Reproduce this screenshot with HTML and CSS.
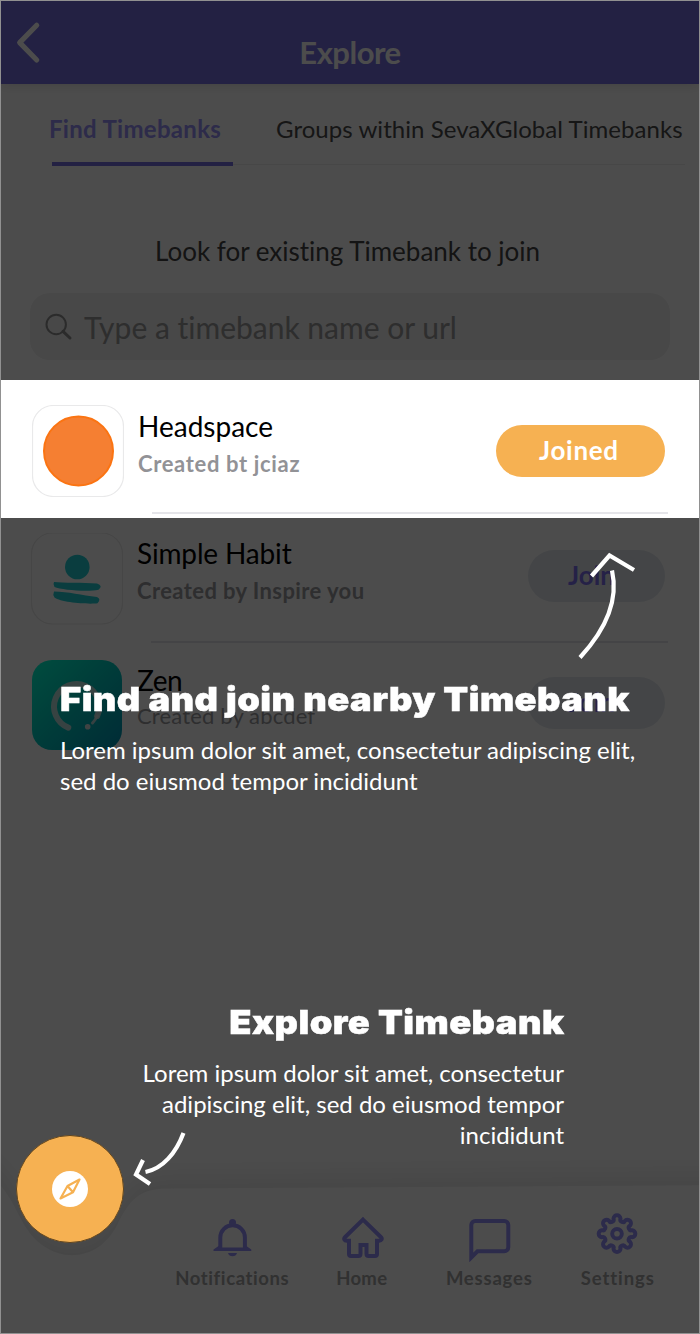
FILE: index.html
```html
<!DOCTYPE html>
<html lang="en">
<head>
<meta charset="utf-8">
<title>Explore</title>
<link rel="stylesheet" href="styles.css">
</head>
<body>
<div class="screen">
  <header class="header">
    <svg class="back" width="30" height="44" viewBox="0 0 30 44"><path d="M22.7 4.3 5.7 21.6 22.7 39"/></svg>
    <h1 class="header-title">Explore</h1>
  </header>

  <nav class="tabs">
    <span class="tab tab-active">Find Timebanks</span>
    <span class="tab tab-groups">Groups within SevaXGlobal Timebanks</span>
  </nav>
  <div class="track"><div class="indicator"></div></div>

  <p class="prompt">Look for existing Timebank to join</p>
  <div class="search">
    <svg class="search-icon" width="30" height="30" viewBox="0 0 30 30"><circle cx="12.2" cy="12.5" r="9.7"/><path d="M19 19.3 26 26"/></svg>
    <span class="placeholder">Type a timebank name or url</span>
  </div>

  <section class="row row-spotlight">
    <svg class="app-icon" width="92" height="92" viewBox="0 0 92 92">
      <rect class="tile" x=".5" y=".5" width="91" height="91" rx="21"/>
      <circle class="sun" cx="46.500" cy="46" r="34.5"/>
    </svg>
    <div class="info">
      <h2 class="name name-headspace">Headspace</h2>
      <p class="by by-headspace">Created bt jciaz</p>
    </div>
    <span class="pill pill-joined">Joined</span>
    <div class="divider"></div>
  </section>

  <section class="row row-habit">
    <svg class="app-icon" width="92" height="92" viewBox="0 0 92 92">
      <rect class="tile" x=".5" y="0" width="91" height="91" rx="21"/>
      <circle class="teal" cx="46.3" cy="34" r="12.3"/>
      <path class="teal" d="M23 49C32 50 52 49.500 66 50.500q6.500 2.200 1.500 6.300C57 59 30 57 23.500 54q-1.800-3-.5-5zM23 58.500c14 0 28 4 43 5.500q4.500 2 .5 6.300C57 71.500 30 69.500 23.500 64.500q-2-3-.5-6z"/>
    </svg>
    <div class="info">
      <h2 class="name name-habit">Simple Habit</h2>
      <p class="by by-habit">Created by Inspire you</p>
    </div>
    <span class="pill">Join</span>
    <div class="divider"></div>
  </section>

  <section class="row row-zen">
    <svg class="app-icon" width="92" height="92" viewBox="0 0 92 92">
      <defs><linearGradient id="zen" x1="0" y1="0" x2="1" y2="1"><stop offset="0" stop-color="#00ffd2"/><stop offset=".4" stop-color="#00d2c2"/><stop offset="1" stop-color="#0092b4"/></linearGradient></defs>
      <rect x="1" y="0" width="90" height="90" rx="20" fill="url(#zen)"/>
      <path class="ring" d="M37.300 67.600A22.600 22.600 0 1 1 66.200 56"/>
      <path class="ring ring-thin" d="M66.200 56A22.600 22.600 0 0 1 61.500 63"/>
      <circle class="ring-dot" cx="56.700" cy="66.700" r="2.800"/>
    </svg>
    <div class="info">
      <h2 class="name name-zen">Zen</h2>
      <p class="by by-zen">Created by abcdef</p>
    </div>
    <span class="pill">Join</span>
  </section>

  <footer class="bottom">
    <svg class="bar-shape" width="698" height="204" viewBox="0 0 698 204"><path d="M-30 30C0 50 10 70 20 90 44 138 98 138 118 92 131 67 142 59 169 59.500L740 56V260H-30Z"/></svg>
    <div class="items">
      <div class="item">
        <svg class="nav-icon" width="50" height="50" viewBox="0 0 50 50"><path d="M13.300 37V25.500a12.300 12.300 0 0 1 24.600 0V37"/><path class="solid" d="M6.500 37.500 13 33v2.500h25v-2.500l6.300 4.500V39H6.500zM21 41h9q-1 3.200-4.500 3.200T21 41z"/><circle class="solid" cx="25.500" cy="10.500" r="3.500"/></svg>
        <span class="label label-notifications">Notifications</span>
      </div>
      <div class="item">
        <svg class="nav-icon" width="50" height="50" viewBox="0 0 50 50"><path d="M27 7.600 44.800 25c2 2 .5 3.700-1.500 3.700H41V42a2 2 0 0 1-2 2h-6.500a2 2 0 0 1-2-2v-9h-6v9a2 2 0 0 1-2 2H15a2 2 0 0 1-2-2V28.700h-2.300c-2.200 0-3.500-1.700-1.500-3.700z"/></svg>
        <span class="label label-home">Home</span>
      </div>
      <div class="item">
        <svg class="nav-icon" width="50" height="50" viewBox="0 0 50 50"><path d="M7.300 45.500V13a4 4 0 0 1 4-4h29a4 4 0 0 1 4 4v22.300a4 4 0 0 1-4 4H13.500z"/></svg>
        <span class="label label-messages">Messages</span>
      </div>
      <div class="item">
        <svg class="nav-icon" width="50" height="50" viewBox="0 0 50 50"><g transform="translate(24 21.700)"><circle r="4.800"/><path d="M15.100-3.490A3.500 3.500 0 0 1 15.100 3.490A2.560 2.560 0 0 0 13.140 8.210A3.500 3.500 0 0 1 8.210 13.140A2.560 2.560 0 0 0 3.490 15.100A3.500 3.500 0 0 1-3.490 15.100A2.560 2.560 0 0 0-8.210 13.140A3.500 3.500 0 0 1-13.140 8.210A2.560 2.560 0 0 0-15.100 3.490A3.500 3.500 0 0 1-15.100-3.490A2.560 2.560 0 0 0-13.140-8.210A3.500 3.500 0 0 1-8.210-13.140A2.560 2.560 0 0 0-3.490-15.100A3.500 3.500 0 0 1 3.490-15.100A2.560 2.560 0 0 0 8.210-13.140A3.500 3.500 0 0 1 13.140-8.210A2.560 2.560 0 0 0 15.100-3.490Z"/></g></svg>
        <span class="label label-settings">Settings</span>
      </div>
    </div>
    <div class="fab">
      <svg width="36" height="36" viewBox="0 0 36 36"><circle cx="18" cy="18" r="18" fill="#fff"/><path class="compass" d="M27.500 8.500 15.500 15 8.500 27.500 21 21.300zM15.500 15 21 21.300"/></svg>
    </div>
  </footer>

  <div class="scrim"></div>

  <aside class="tip tip-join">
    <h3 class="tip-title">Find and join nearby Timebank</h3>
    <p class="tip-text">Lorem ipsum dolor sit amet, consectetur adipiscing elit,<br>sed do eiusmod tempor incididunt</p>
  </aside>
  <aside class="tip tip-explore">
    <h3 class="tip-title">Explore Timebank</h3>
    <p class="tip-text">Lorem ipsum dolor sit amet, consectetur<br>adipiscing elit, sed do eiusmod tempor<br>incididunt</p>
  </aside>
  <svg class="arrow arrow-join" width="70" height="120" viewBox="0 0 70 120"><path d="M21.500 26 39.500 5.500 64 20"/><path d="M42 20.500C48 47 39 76 10 107.500"/></svg>
  <svg class="arrow arrow-explore" width="70" height="60" viewBox="0 0 70 60"><path d="M23 29 16 43.500 30 53"/><path d="M63.500 2C56 22 43 37.500 25.500 41"/></svg>
</div>
</body>
</html>
```
FILE: styles.css
```css
* { box-sizing: border-box; }
body { margin: 0; font-family: Lato, "Open Sans", sans-serif; font-variant-ligatures: none; }
h1, h2, h3, p { margin: 0; font-weight: 400; }
svg { display: block; }

.screen {
  position: relative;
  display: flex;
  flex-direction: column;
  width: 700px;
  height: 1334px;
  border: 1px solid #919191;
  background: #fff;
  overflow: hidden;
}

.header {
  flex: none;
  display: grid;
  grid-template-columns: 60px 1fr 60px;
  height: 83px;
  background: #756edf;
  box-shadow: 0 2px 10px rgba(0, 0, 0, .12);
}
.back { margin: 20px 0 0 13px; fill: none; stroke: #fff; stroke-width: 5.2; stroke-linecap: round; stroke-linejoin: round; }
.header-title {
  padding-top: 33px;
  font-size: 31px;
  line-height: 36px;
  font-weight: 700;
  letter-spacing: -.5px;
  text-align: center;
  color: #fff;
}

.tabs { flex: none; display: flex; padding: 30px 0 18px 48px; font-size: 24px; line-height: 30px; color: #4c4c4c; white-space: nowrap; }
.tab-active { flex: none; width: 227px; font-weight: 700; letter-spacing: .3px; color: #968ff8; }
.tab-groups { letter-spacing: .05px; }
.track { flex: none; height: 4px; width: 633px; margin-left: 51px; background: linear-gradient(#efefef, #efefef) 0 2px / 100% 1px no-repeat; }
.indicator { width: 181px; height: 4px; background: #756edf; }

.prompt { flex: none; margin-top: 69px; padding-left: 154px; font-size: 26px; line-height: 32px; color: #444; white-space: nowrap; }
.search {
  flex: none;
  display: flex;
  align-items: center;
  height: 67px;
  margin: 26px 29px 20px;
  padding-left: 14px;
  border-radius: 20px;
  background: #f0f0f0;
}
.search-icon { fill: none; stroke: #909090; stroke-width: 2; stroke-linecap: round; }
.search-icon path { stroke-width: 3; }
.placeholder { padding-left: 10px; font-size: 30px; line-height: 40px; color: #999; white-space: nowrap; }

.row {
  flex: none;
  display: grid;
  grid-template-columns: 92px 1fr auto;
  grid-template-rows: 1fr auto;
  align-items: start;
  padding: 0 34px 0 30px;
}
.row-spotlight { position: relative; z-index: 2; height: 138px; padding: 25px 34px 4px 31px; background: #fff; }
.row-habit { height: 125px; padding-top: 15px; }
.row-zen { height: 125px; padding-top: 17px; }
.tile { fill: #fff; stroke: #e9e9ea; stroke-width: 1.2; }
.row-habit .tile { stroke: #e9e9e9; }
.sun { fill: #f57f32; stroke: #fb7412; stroke-width: 2; }
.teal { fill: #22cdd2; }
.ring { fill: none; stroke: #d8e2e2; stroke-opacity: .85; stroke-width: 6; stroke-linecap: round; }
.ring-thin { stroke-width: 3; }
.ring-dot { fill: #d8e2e2; }

.info { padding: 2px 0 0 14px; white-space: nowrap; }
.row-spotlight .info { padding: 3px 0 0 14px; }
.name { font-size: 28px; line-height: 36px; color: #000; }
.by { margin-top: 7px; font-size: 22px; line-height: 26px; font-weight: 700; letter-spacing: .4px; color: #9a9a9e; }
.by-headspace { letter-spacing: .65px; color: #929296; }
.by-zen { margin-top: 5px; font-weight: 400; letter-spacing: .15px; }
.name-habit { letter-spacing: -.15px; }
.name-zen { letter-spacing: -.5px; }

.pill {
  width: 137px;
  height: 52px;
  margin-top: 17px;
  padding-left: 40px;
  border-radius: 26px;
  background: #e3e8ee;
  font-size: 26px;
  line-height: 50px;
  font-weight: 700;
  color: #7c70ee;
}
.pill-joined { width: 169px; margin-top: 20px; background: #f6b152; color: #fff; padding-left: 43px; letter-spacing: .7px; }
.divider { grid-column: 1 / -1; height: 2px; margin: 0 -3px 0 120px; background: #e5e5e9; }

.bottom { position: relative; height: 204px; margin-top: auto; flex: none; }
.bar-shape { position: absolute; inset: 0; overflow: visible; }
.bar-shape path { fill: #fff; filter: drop-shadow(0 -8px 14px rgba(0, 0, 0, .1)); }
.items { position: relative; display: grid; grid-template-columns: repeat(4, 128.5px); padding: 83px 0 0 167px; }
.item { display: flex; flex-direction: column; align-items: center; gap: 4px; }
.nav-icon { fill: none; stroke: #958ffa; stroke-width: 4; }
.nav-icon .solid { fill: #958ffa; stroke: none; }
.label { font-size: 18.5px; line-height: 24px; font-weight: 700; letter-spacing: .6px; color: #a4a4a4; }
.label-home { padding-left: 2px; letter-spacing: .3px; }
.label-messages { letter-spacing: .8px; }
.label-settings { letter-spacing: .9px; }
.fab {
  position: absolute;
  z-index: 2;
  left: 15px;
  top: 6px;
  display: grid;
  place-items: center;
  width: 108px;
  height: 108px;
  border: 1px solid #60451f;
  border-radius: 50%;
  background: #f6b152;
}
.compass { fill: none; stroke: #f6b152; stroke-width: 2.2; stroke-linejoin: round; }

.scrim { position: absolute; inset: 0; z-index: 1; background: rgba(0, 0, 0, .7); }

.tip { position: absolute; z-index: 3; color: #fff; white-space: nowrap; }
.tip-join { left: 59px; top: 677px; }
.tip-explore { right: 135px; top: 1000px; text-align: right; }
.tip-title {
  font-family: Inter, "Liberation Sans", sans-serif;
  font-weight: 900;
  font-size: 33px;
  line-height: 42px;
  letter-spacing: .4px;
  -webkit-text-stroke: .5px #fff;
  transform: scaleX(1.1);
  transform-origin: 0 50%;
}
.tip-explore .tip-title { transform-origin: 100% 50%; }
.tip-text { margin-top: 14px; font-size: 24px; line-height: 31px; }
.arrow { position: absolute; z-index: 3; fill: none; stroke: #fff; stroke-width: 4.2; overflow: visible; }
.arrow-join { left: 569px; top: 549px; }
.arrow-explore { left: 119px; top: 1130px; }
```
